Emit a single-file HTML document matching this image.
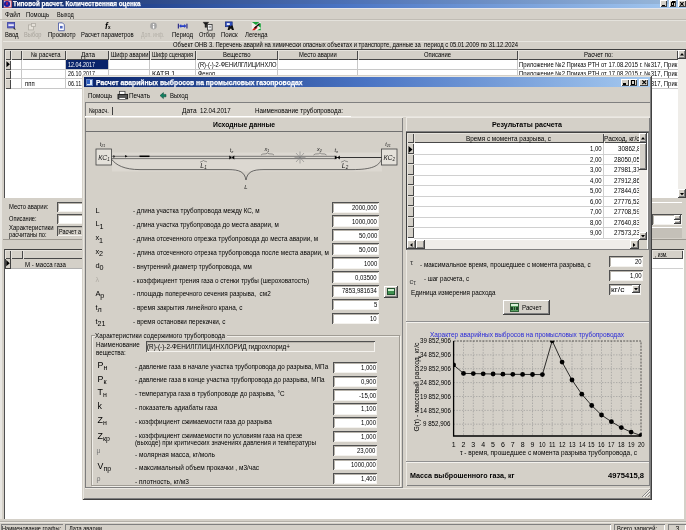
<!DOCTYPE html>
<html lang="ru"><head><meta charset="utf-8"><title>Типовой расчет</title>
<style>
html,body{margin:0;padding:0;}
body{width:686px;height:530px;overflow:hidden;background:#d4d0c8;position:relative;font-family:"Liberation Sans", "DejaVu Sans", sans-serif;}
div{position:absolute;box-sizing:border-box;}
svg{position:absolute;overflow:visible;}
.t{position:absolute;white-space:pre;transform-origin:0 50%;left:0;}
#root{left:0;top:0;width:686px;height:530px;overflow:hidden;will-change:transform;opacity:0.999;filter:blur(0.35px);}
#t1{left:12.50px;transform:scaleX(0.8446);}
#t2{left:5.00px;transform:scaleX(0.9002);}
#t3{left:26.00px;transform:scaleX(0.8504);}
#t4{left:57.00px;transform:scaleX(0.7970);}
#t5{left:4.50px;transform:scaleX(0.8364);}
#t6{left:23.50px;transform:scaleX(0.8140);}
#t7{left:47.50px;transform:scaleX(0.8602);}
#t8{left:80.50px;transform:scaleX(0.8350);}
#t9{left:141.00px;transform:scaleX(0.7373);}
#t10{left:172.00px;transform:scaleX(0.8550);}
#t11{left:198.70px;transform:scaleX(0.7969);}
#t12{left:221.00px;transform:scaleX(0.8502);}
#t13{left:244.50px;transform:scaleX(0.8451);}
#t14{left:104.88px;transform:scaleX(1.0000);}
#t15{left:108.02px;transform:scaleX(1.0000);}
#t16{left:173.00px;transform:scaleX(0.8365);}
#t17{left:30.50px;transform:scaleX(0.8429);}
#t18{left:80.50px;transform:scaleX(0.9023);}
#t19{left:111.00px;transform:scaleX(0.8322);}
#t20{left:151.50px;transform:scaleX(0.7793);}
#t21{left:223.00px;transform:scaleX(0.8494);}
#t22{left:299.00px;transform:scaleX(0.8322);}
#t23{left:424.00px;transform:scaleX(0.8380);}
#t24{left:584.00px;transform:scaleX(0.8569);}
#t25{left:67.50px;transform:scaleX(0.7704);}
#t26{left:67.50px;transform:scaleX(0.7704);}
#t27{left:67.50px;transform:scaleX(0.7823);}
#t28{left:25.00px;transform:scaleX(0.8440);}
#t29{left:151.80px;transform:scaleX(0.9906);}
#t30{left:198.00px;transform:scaleX(0.8240);}
#t31{left:198.00px;transform:scaleX(0.8132);}
#t32{left:519.00px;transform:scaleX(0.8445);}
#t33{left:519.00px;transform:scaleX(0.8445);}
#t34{left:519.00px;transform:scaleX(0.8445);}
#t35{left:9.00px;transform:scaleX(0.8340);}
#t36{left:9.00px;transform:scaleX(0.8051);}
#t37{left:9.00px;transform:scaleX(0.8573);}
#t38{left:9.00px;transform:scaleX(0.8105);}
#t39{left:59.00px;transform:scaleX(0.7827);}
#t40{left:655.00px;transform:scaleX(0.7030);}
#t41{left:24.50px;transform:scaleX(0.8738);}
#t42{left:2.00px;transform:scaleX(0.8022);}
#t43{left:69.00px;transform:scaleX(0.8129);}
#t44{left:617.00px;transform:scaleX(0.8271);}
#t45{left:675.55px;transform:scaleX(1.0000);}
#t46{left:96.00px;transform:scaleX(0.8995);}
#t47{left:87.60px;transform:scaleX(0.8984);}
#t48{left:128.70px;transform:scaleX(0.9155);}
#t49{left:169.50px;transform:scaleX(0.8591);}
#t50{left:89.30px;transform:scaleX(0.8144);}
#t51{left:181.80px;transform:scaleX(0.9410);}
#t52{left:200.20px;transform:scaleX(0.8760);}
#t53{left:255.30px;transform:scaleX(0.8982);}
#t54{left:212.70px;transform:scaleX(0.9057);}
#t55{left:98.19px;transform:scaleX(1.0000);}
#t56{left:383.49px;transform:scaleX(1.0000);}
#t57{left:99.73px;transform:scaleX(1.0000);}
#t58{left:385.23px;transform:scaleX(1.0000);}
#t59{left:229.72px;transform:scaleX(1.0000);}
#t60{left:334.52px;transform:scaleX(1.0000);}
#t61{left:264.62px;transform:scaleX(1.0000);}
#t62{left:316.93px;transform:scaleX(1.0000);}
#t63{left:200.29px;transform:scaleX(1.0000);}
#t64{left:341.79px;transform:scaleX(1.0000);}
#t65{left:244.33px;transform:scaleX(1.0000);}
#t66{left:95.40px;transform:scaleX(1.0000);}
#t67{left:132.80px;transform:scaleX(0.8996);}
#t68{left:352.10px;transform:scaleX(0.8526);}
#t69{left:95.40px;transform:scaleX(1.0000);}
#t70{left:132.80px;transform:scaleX(0.8935);}
#t71{left:352.10px;transform:scaleX(0.8526);}
#t72{left:95.40px;transform:scaleX(1.0000);}
#t73{left:132.80px;transform:scaleX(0.9044);}
#t74{left:358.70px;transform:scaleX(0.8543);}
#t75{left:95.40px;transform:scaleX(1.0000);}
#t76{left:132.80px;transform:scaleX(0.9077);}
#t77{left:358.70px;transform:scaleX(0.8543);}
#t78{left:95.40px;transform:scaleX(1.0000);}
#t79{left:132.80px;transform:scaleX(0.8985);}
#t80{left:363.80px;transform:scaleX(0.8473);}
#t81{left:95.40px;transform:scaleX(1.0000);}
#t82{left:132.80px;transform:scaleX(0.9009);}
#t83{left:355.40px;transform:scaleX(0.8533);}
#t84{left:95.40px;transform:scaleX(1.0000);}
#t85{left:132.80px;transform:scaleX(0.9080);}
#t86{left:342.20px;transform:scaleX(0.8511);}
#t87{left:95.40px;transform:scaleX(1.0000);}
#t88{left:132.80px;transform:scaleX(0.9130);}
#t89{left:373.70px;transform:scaleX(0.8448);}
#t90{left:95.40px;transform:scaleX(1.0000);}
#t91{left:132.80px;transform:scaleX(0.9106);}
#t92{left:370.40px;transform:scaleX(0.8465);}
#t93{left:95.40px;transform:scaleX(0.9027);}
#t94{left:95.60px;transform:scaleX(0.9025);}
#t95{left:95.60px;transform:scaleX(0.8950);}
#t96{left:147.40px;transform:scaleX(0.9083);}
#t97{left:97.50px;transform:scaleX(1.0000);}
#t98{left:135.00px;transform:scaleX(0.9048);}
#t99{left:360.70px;transform:scaleX(0.8556);}
#t100{left:97.50px;transform:scaleX(1.0000);}
#t101{left:135.00px;transform:scaleX(0.9062);}
#t102{left:360.70px;transform:scaleX(0.8556);}
#t103{left:97.50px;transform:scaleX(1.0000);}
#t104{left:135.00px;transform:scaleX(0.9049);}
#t105{left:358.50px;transform:scaleX(0.8661);}
#t106{left:97.50px;transform:scaleX(1.0000);}
#t107{left:135.00px;transform:scaleX(0.9229);}
#t108{left:360.70px;transform:scaleX(0.8556);}
#t109{left:97.50px;transform:scaleX(1.0000);}
#t110{left:135.00px;transform:scaleX(0.9130);}
#t111{left:360.70px;transform:scaleX(0.8556);}
#t112{left:97.50px;transform:scaleX(1.0000);}
#t113{left:360.70px;transform:scaleX(0.8556);}
#t114{left:96.60px;transform:scaleX(1.0000);}
#t115{left:135.00px;transform:scaleX(0.9365);}
#t116{left:357.40px;transform:scaleX(0.8543);}
#t117{left:97.50px;transform:scaleX(1.0000);}
#t118{left:135.00px;transform:scaleX(0.9247);}
#t119{left:350.80px;transform:scaleX(0.8526);}
#t120{left:96.60px;transform:scaleX(1.0000);}
#t121{left:135.00px;transform:scaleX(0.9399);}
#t122{left:360.70px;transform:scaleX(0.8556);}
#t123{left:135.00px;transform:scaleX(0.9143);}
#t124{left:135.00px;transform:scaleX(0.8938);}
#t125{left:492.00px;transform:scaleX(0.9418);}
#t126{left:465.50px;transform:scaleX(0.9094);}
#t127{left:604.30px;transform:scaleX(0.9334);}
#t128{left:590.10px;transform:scaleX(0.8587);}
#t129{left:617.80px;transform:scaleX(0.8889);}
#t130{left:590.10px;transform:scaleX(0.8587);}
#t131{left:614.30px;transform:scaleX(0.8903);}
#t132{left:590.10px;transform:scaleX(0.8587);}
#t133{left:614.30px;transform:scaleX(0.8903);}
#t134{left:590.10px;transform:scaleX(0.8587);}
#t135{left:614.30px;transform:scaleX(0.8903);}
#t136{left:590.10px;transform:scaleX(0.8587);}
#t137{left:614.30px;transform:scaleX(0.8903);}
#t138{left:590.10px;transform:scaleX(0.8587);}
#t139{left:614.30px;transform:scaleX(0.8903);}
#t140{left:590.10px;transform:scaleX(0.8587);}
#t141{left:614.30px;transform:scaleX(0.8903);}
#t142{left:590.10px;transform:scaleX(0.8587);}
#t143{left:614.30px;transform:scaleX(0.8903);}
#t144{left:590.10px;transform:scaleX(0.8587);}
#t145{left:614.30px;transform:scaleX(0.8903);}
#t146{left:410.11px;transform:scaleX(1.0000);}
#t147{left:419.80px;transform:scaleX(0.9066);}
#t148{left:635.30px;transform:scaleX(0.8465);}
#t149{left:409.44px;transform:scaleX(1.0000);}
#t150{left:424.00px;transform:scaleX(0.8786);}
#t151{left:630.20px;transform:scaleX(0.8587);}
#t152{left:410.50px;transform:scaleX(0.9004);}
#t153{left:611.00px;transform:scaleX(1.2113);}
#t154{left:522.40px;transform:scaleX(0.8803);}
#t155{left:430.00px;transform:scaleX(0.9268);}
#t156{left:419.60px;transform:scaleX(0.8845);}
#t157{left:419.60px;transform:scaleX(0.8845);}
#t158{left:419.60px;transform:scaleX(0.8845);}
#t159{left:419.60px;transform:scaleX(0.8845);}
#t160{left:419.60px;transform:scaleX(0.8845);}
#t161{left:419.60px;transform:scaleX(0.8845);}
#t162{left:423.10px;transform:scaleX(0.8826);}
#t163{left:451.65px;transform:scaleX(1.0000);}
#t164{left:461.51px;transform:scaleX(1.0000);}
#t165{left:471.37px;transform:scaleX(1.0000);}
#t166{left:481.24px;transform:scaleX(1.0000);}
#t167{left:491.10px;transform:scaleX(1.0000);}
#t168{left:500.96px;transform:scaleX(1.0000);}
#t169{left:510.83px;transform:scaleX(1.0000);}
#t170{left:520.69px;transform:scaleX(1.0000);}
#t171{left:530.55px;transform:scaleX(1.0000);}
#t172{left:539.07px;transform:scaleX(0.8465);}
#t173{left:548.93px;transform:scaleX(0.9064);}
#t174{left:558.79px;transform:scaleX(0.8465);}
#t175{left:568.66px;transform:scaleX(0.8465);}
#t176{left:578.52px;transform:scaleX(0.8465);}
#t177{left:588.38px;transform:scaleX(0.8465);}
#t178{left:598.25px;transform:scaleX(0.8465);}
#t179{left:608.11px;transform:scaleX(0.8465);}
#t180{left:617.97px;transform:scaleX(0.8465);}
#t181{left:627.84px;transform:scaleX(0.8465);}
#t182{left:637.70px;transform:scaleX(0.8465);}
#t183{left:459.50px;transform:scaleX(0.9258);}
#t184{left:410.40px;transform:scaleX(0.9500);}
#t185{left:608.00px;transform:scaleX(1.0154);}
</style></head>
<body>
<div id="root">
<div style="left:0px;top:0px;width:686px;height:8.4px;background:linear-gradient(90deg,#0a246a 0%,#4a74c4 50%,#a6caf0 100%);"></div>
<div style="left:0px;top:0px;width:686px;height:4px;background:rgba(90,90,90,0.14);"></div>
<div style="left:0px;top:8.4px;width:686px;height:1px;background:#e6e6ea;"></div>
<div style="left:2.6px;top:-0.5px;width:9.2px;height:8.7px;background:#e4c4d4;border-radius:1.5px;border:0.8px solid #c06070;border-left-color:#404080;"></div>
<div style="left:4px;top:1px;width:6.4px;height:5.8px;background:#1c1ca0;border-radius:50%;"></div>
<div style="left:6.2px;top:2.4px;width:1.4px;height:3px;background:#a02060;border-radius:1px;"></div>
<span class="t" id="t1" style="top:-0.55px;font-size:7.5px;line-height:9.5px;color:#fff;font-weight:bold;-webkit-text-stroke:0.25px #fff;">Типовой расчет. Количественная оценка</span>
<div style="left:660.4px;top:-0.5px;width:6.8px;height:7.6px;background:#d4d0c8;box-shadow:inset 1px 1px 0 #fff, inset -1px -1px 0 #404040;"></div>
<div style="left:669px;top:-0.5px;width:7.4px;height:7.6px;background:#d4d0c8;box-shadow:inset 1px 1px 0 #fff, inset -1px -1px 0 #404040;"></div>
<div style="left:678.2px;top:-0.5px;width:7.8px;height:7.6px;background:#d4d0c8;box-shadow:inset 1px 1px 0 #fff, inset -1px -1px 0 #404040;"></div>
<div style="left:662px;top:4.6px;width:3px;height:1.1px;background:#000;"></div>
<div style="left:670.6px;top:2.4px;width:3.6px;height:3.4px;border:0.8px solid #000;border-top-width:1.3px;"></div>
<div style="left:671.8px;top:1.2px;width:3.4px;height:2px;border-top:1.2px solid #000;border-right:0.8px solid #000;"></div>
<svg style="left:680.2px;top:1.6px" width="3.8" height="3.8"><path d="M0.2 0.2L3.6 3.6M3.6 0.2L0.2 3.6" stroke="#000" stroke-width="1.1"/></svg>
<div style="left:0px;top:0px;width:2.2px;height:521px;background:#e8e6e1;"></div>
<span class="t" id="t2" style="top:10.10px;font-size:7px;line-height:9px;color:#000;">Файл</span>
<span class="t" id="t3" style="top:10.10px;font-size:7px;line-height:9px;color:#000;">Помощь</span>
<span class="t" id="t4" style="top:10.10px;font-size:7px;line-height:9px;color:#000;">Выход</span>
<div style="left:0px;top:19px;width:686px;height:1px;background:#c0bcb4;"></div>
<div style="left:0px;top:20px;width:686px;height:1px;background:#e4e2dc;"></div>
<span class="t" id="t5" style="top:30.10px;font-size:7px;line-height:9px;color:#000;">Ввод</span>
<span class="t" id="t6" style="top:30.10px;font-size:7px;line-height:9px;color:#a8a49c;">Выбор</span>
<span class="t" id="t7" style="top:30.10px;font-size:7px;line-height:9px;color:#000;">Просмотр</span>
<span class="t" id="t8" style="top:30.10px;font-size:7px;line-height:9px;color:#000;">Расчет параметров</span>
<span class="t" id="t9" style="top:30.10px;font-size:7px;line-height:9px;color:#b4b0a8;">Доп. инф.</span>
<span class="t" id="t10" style="top:30.10px;font-size:7px;line-height:9px;color:#000;">Период</span>
<span class="t" id="t11" style="top:30.10px;font-size:7px;line-height:9px;color:#000;">Отбор</span>
<span class="t" id="t12" style="top:30.10px;font-size:7px;line-height:9px;color:#000;">Поиск</span>
<span class="t" id="t13" style="top:30.10px;font-size:7px;line-height:9px;color:#000;">Легенда</span>
<svg style="left:0;top:21px" width="280" height="12" viewBox="0 21 280 12">
<g transform="translate(0,0.9)">
<rect x="7.6" y="21.6" width="7" height="5.4" fill="#6468c8" stroke="#3840a0" stroke-width="0.8"/>
<rect x="8.4" y="23.4" width="5.4" height="1.6" fill="#f4f4fc"/>
<path d="M13.6 26.4l2.4 2.2h-1.2l-1.2-0.4z" fill="#202020"/>
<rect x="28.5" y="24" width="5" height="5" fill="#e4e0d8" stroke="#b0aca4" stroke-width="0.8"/>
<rect x="31.5" y="22.5" width="4" height="3" fill="#e4e0d8" stroke="#b0aca4" stroke-width="0.8"/>
<path d="M58.5 22h4l1.8 1.8v6h-5.8z" fill="#fff" stroke="#4050a0" stroke-width="0.8"/>
<rect x="60" y="25" width="2.6" height="2.6" fill="#5068c0"/>
<rect x="150.2" y="21.7" width="6.6" height="6.8" rx="3.3" fill="#a4a4a4"/>
<rect x="152.9" y="23" width="1.3" height="1.2" fill="#fff"/>
<rect x="152.9" y="24.8" width="1.3" height="2.8" fill="#fff"/>
<path d="M179 25.2l2.2-2v1.2h3v-1.2l2.2 2-2.2 2v-1.2h-3v1.2z" fill="#2840c8"/>
<rect x="177.8" y="22.8" width="1.1" height="4.8" fill="#202080"/>
<rect x="186.4" y="22.8" width="1.1" height="4.8" fill="#202080"/>
<path d="M203.2 21.4h5.4l-1.9 2.4v2.6h-1.6v-2.6z" fill="#181818" stroke="#181818" stroke-width="0.5"/>
<rect x="207.6" y="23.6" width="4.5" height="5.6" fill="#fff" stroke="#282828" stroke-width="0.8"/>
<path d="M208.6 25.4h2.6M208.6 26.8h2.6" stroke="#505050" stroke-width="0.6"/>
<rect x="225.4" y="21" width="6.8" height="4.8" fill="#3050c0" stroke="#182878" stroke-width="0.7"/>
<rect x="226.8" y="22.2" width="3" height="2" fill="#e8ecf8"/>
<path d="M227.6 29l1.2-4.4h1.4l.5 1.6.5-1.6h1.4l1.4 4.4h-2.2l-.3-1.2h-1.6l-.3 1.2z" fill="#101010"/>
<rect x="251.8" y="21" width="9" height="8.4" fill="#f0f0ec"/>
<path d="M251.8 21h7.6l-3.4 3.2z" fill="#18a038"/>
<path d="M260.8 22v5l-3-2.4z" fill="#18a038"/>
<path d="M252 29.4l3.6-4.2 2 1.6-3 2.6z" fill="#d82020"/>
<path d="M259.6 22.6l-5 4.8" stroke="#101010" stroke-width="1.3"/>
<path d="M257 29.4h3.8v-2z" fill="#18a038"/>
</g></svg>
<span class="t" id="t14" style="top:20.95px;font-size:8.5px;line-height:10.5px;color:#000;font-weight:bold;font-style:italic;font-family:"Liberation Serif",serif;">f</span>
<span class="t" id="t15" style="top:24.50px;font-size:4.6px;line-height:6.6px;color:#000;font-weight:bold;">x</span>
<div style="left:3px;top:40.5px;width:683px;height:8.5px;background:#d4d0c8;box-shadow:inset 0 1px 0 #e8e6e0;"></div>
<span class="t" id="t16" style="top:40.10px;font-size:7px;line-height:9px;color:#000;">Объект ОНВ 3. Перечень аварий на химически опасных объектах и транспорте, данные за  период с 05.01.2009 по 31.12.2024</span>
<div style="left:4px;top:49px;width:682px;height:149px;background:#fff;border-left:1px solid #505050;border-top:1px solid #404040;"></div>
<div style="left:5px;top:50px;width:6px;height:10px;background:#d4d0c8;box-shadow:inset 1px 1px 0 #e6e3dd, inset -1px -1px 0 #484848;"></div>
<div style="left:11px;top:50px;width:11px;height:10px;background:#d4d0c8;box-shadow:inset 1px 1px 0 #e6e3dd, inset -1px -1px 0 #484848;"></div>
<div style="left:22px;top:50px;width:44px;height:10px;background:#d4d0c8;box-shadow:inset 1px 1px 0 #e6e3dd, inset -1px -1px 0 #484848;"></div>
<div style="left:66px;top:50px;width:43px;height:10px;background:#d4d0c8;box-shadow:inset 1px 1px 0 #e6e3dd, inset -1px -1px 0 #484848;"></div>
<div style="left:109px;top:50px;width:41px;height:10px;background:#d4d0c8;box-shadow:inset 1px 1px 0 #e6e3dd, inset -1px -1px 0 #484848;"></div>
<div style="left:150px;top:50px;width:46px;height:10px;background:#d4d0c8;box-shadow:inset 1px 1px 0 #e6e3dd, inset -1px -1px 0 #484848;"></div>
<div style="left:196px;top:50px;width:82px;height:10px;background:#d4d0c8;box-shadow:inset 1px 1px 0 #e6e3dd, inset -1px -1px 0 #484848;"></div>
<div style="left:278px;top:50px;width:80px;height:10px;background:#d4d0c8;box-shadow:inset 1px 1px 0 #e6e3dd, inset -1px -1px 0 #484848;"></div>
<div style="left:358px;top:50px;width:160px;height:10px;background:#d4d0c8;box-shadow:inset 1px 1px 0 #e6e3dd, inset -1px -1px 0 #484848;"></div>
<div style="left:518px;top:50px;width:160px;height:10px;background:#d4d0c8;box-shadow:inset 1px 1px 0 #e6e3dd, inset -1px -1px 0 #484848;"></div>
<span class="t" id="t17" style="top:50.10px;font-size:7px;line-height:9px;color:#000;">№ расчета</span>
<span class="t" id="t18" style="top:50.10px;font-size:7px;line-height:9px;color:#000;">Дата</span>
<span class="t" id="t19" style="top:50.10px;font-size:7px;line-height:9px;color:#000;">Шифр аварии</span>
<span class="t" id="t20" style="top:50.10px;font-size:7px;line-height:9px;color:#000;">Шифр сценария</span>
<span class="t" id="t21" style="top:50.10px;font-size:7px;line-height:9px;color:#000;">Вещество</span>
<span class="t" id="t22" style="top:50.10px;font-size:7px;line-height:9px;color:#000;">Место аварии</span>
<span class="t" id="t23" style="top:50.10px;font-size:7px;line-height:9px;color:#000;">Описание</span>
<span class="t" id="t24" style="top:50.10px;font-size:7px;line-height:9px;color:#000;">Расчет по:</span>
<div style="left:5px;top:60px;width:6px;height:10px;background:#d4d0c8;box-shadow:inset 1px 1px 0 #e6e3dd, inset -1px -1px 0 #484848;"></div>
<div style="left:11px;top:69px;width:667px;height:1px;background:#c8c8c8;"></div>
<div style="left:5px;top:70px;width:6px;height:9px;background:#d4d0c8;box-shadow:inset 1px 1px 0 #e6e3dd, inset -1px -1px 0 #484848;"></div>
<div style="left:11px;top:78px;width:667px;height:1px;background:#c8c8c8;"></div>
<div style="left:5px;top:79px;width:6px;height:10px;background:#d4d0c8;box-shadow:inset 1px 1px 0 #e6e3dd, inset -1px -1px 0 #484848;"></div>
<div style="left:11px;top:88px;width:667px;height:1px;background:#c8c8c8;"></div>
<div style="left:21px;top:60px;width:1px;height:29px;background:#c8c8c8;"></div>
<div style="left:65px;top:60px;width:1px;height:29px;background:#c8c8c8;"></div>
<div style="left:108px;top:60px;width:1px;height:29px;background:#c8c8c8;"></div>
<div style="left:149px;top:60px;width:1px;height:29px;background:#c8c8c8;"></div>
<div style="left:195px;top:60px;width:1px;height:29px;background:#c8c8c8;"></div>
<div style="left:277px;top:60px;width:1px;height:29px;background:#c8c8c8;"></div>
<div style="left:357px;top:60px;width:1px;height:29px;background:#c8c8c8;"></div>
<div style="left:517px;top:60px;width:1px;height:29px;background:#c8c8c8;"></div>
<svg style="left:6.2px;top:61px" width="4.4" height="6.6" viewBox="0 0 5 7"><path d="M0.5 0L4.5 3.5L0.5 7z" fill="#000"/></svg>
<div style="left:66px;top:60px;width:42px;height:9px;background:#0a246a;"></div>
<span class="t" id="t25" style="top:59.80px;font-size:7px;line-height:9px;color:#fff;">12.04.2017</span>
<span class="t" id="t26" style="top:69.40px;font-size:7px;line-height:9px;color:#000;">26.10.2017</span>
<span class="t" id="t27" style="top:79.00px;font-size:7px;line-height:9px;color:#000;">06.11.2017</span>
<span class="t" id="t28" style="top:79.20px;font-size:7px;line-height:9px;color:#000;">ппп</span>
<span class="t" id="t29" style="top:69.40px;font-size:7px;line-height:9px;color:#000;">КАТЯ 1</span>
<span class="t" id="t30" style="top:59.80px;font-size:7px;line-height:9px;color:#000;">(R)-(-)-2-ФЕНИЛГЛИЦИНХЛО</span>
<span class="t" id="t31" style="top:69.40px;font-size:7px;line-height:9px;color:#000;">Фенол</span>
<span class="t" id="t32" style="top:59.80px;font-size:7px;line-height:9px;color:#000;">Приложение №2 Приказ РТН от 17.08.2015 г. №317, Прик</span>
<span class="t" id="t33" style="top:69.40px;font-size:7px;line-height:9px;color:#000;">Приложение №2 Приказ РТН от 17.08.2015 г. №317, Прик</span>
<span class="t" id="t34" style="top:79.00px;font-size:7px;line-height:9px;color:#000;">Приложение №2 Приказ РТН от 17.08.2015 г. №317, Прик</span>
<div style="left:678px;top:50px;width:8px;height:148px;background:#efede9;"></div>
<div style="left:678px;top:50px;width:8px;height:9px;background:#d4d0c8;box-shadow:inset -1px -1px 0 #404040, inset 1px 1px 0 #fff, inset -2px -2px 0 #808080;"></div>
<div style="left:678px;top:189px;width:8px;height:9px;background:#d4d0c8;box-shadow:inset -1px -1px 0 #404040, inset 1px 1px 0 #fff, inset -2px -2px 0 #808080;"></div>
<svg style="left:680px;top:53.2px" width="4" height="2.6"><path d="M0 2.6L2 0L4 2.6z" fill="#000"/></svg>
<svg style="left:680px;top:192.5px" width="4" height="2.6"><path d="M0 0L2 2.6L4 0z" fill="#000"/></svg>
<div style="left:3px;top:198.5px;width:683px;height:41px;background:#d4d0c8;"></div>
<span class="t" id="t35" style="top:202.30px;font-size:7px;line-height:9px;color:#000;">Место аварии:</span>
<span class="t" id="t36" style="top:213.70px;font-size:7px;line-height:9px;color:#000;">Описание:</span>
<span class="t" id="t37" style="top:223.20px;font-size:7px;line-height:9px;color:#000;">Характеристики</span>
<span class="t" id="t38" style="top:230.10px;font-size:7px;line-height:9px;color:#000;">расчитаны по:</span>
<div style="left:57px;top:202px;width:40px;height:10px;background:#fff;box-shadow:inset 1px 1px 0 #505050, inset -1px -1px 0 #f4f2ee, inset 2px 2px 0 #b8b4ac;"></div>
<div style="left:57px;top:214px;width:40px;height:10px;background:#fff;box-shadow:inset 1px 1px 0 #505050, inset -1px -1px 0 #f4f2ee, inset 2px 2px 0 #b8b4ac;"></div>
<div style="left:57px;top:226px;width:40px;height:10.4px;background:#d4d0c8;box-shadow:inset 1px 1px 0 #505050, inset -1px -1px 0 #f4f2ee, inset 2px 2px 0 #b8b4ac;"></div>
<span class="t" id="t39" style="top:227.00px;font-size:7px;line-height:9px;color:#000;">Расчет а</span>
<div style="left:652px;top:201.5px;width:30px;height:0.8px;background:#fff;"></div>
<div style="left:652px;top:214px;width:29.8px;height:11.4px;background:#fff;box-shadow:inset 1px 1px 0 #505050, inset -1px -1px 0 #f4f2ee, inset 2px 2px 0 #b8b4ac;"></div>
<div style="left:674px;top:215.2px;width:6.6px;height:4.6px;background:#d4d0c8;box-shadow:inset -1px -1px 0 #404040, inset 1px 1px 0 #fff, inset -2px -2px 0 #808080;"></div>
<div style="left:674px;top:219.8px;width:6.6px;height:4.6px;background:#d4d0c8;box-shadow:inset -1px -1px 0 #404040, inset 1px 1px 0 #fff, inset -2px -2px 0 #808080;"></div>
<div style="left:652px;top:226.6px;width:30px;height:0.8px;background:#fff;"></div>
<div style="left:652px;top:228.3px;width:30px;height:9.6px;background:#c4c0b8;"></div>
<div style="left:3px;top:239.5px;width:683px;height:9.5px;background:#d2cec6;"></div>
<div style="left:3px;top:239px;width:683px;height:1px;background:#9c9890;"></div>
<div style="left:4px;top:249px;width:679.5px;height:269.5px;background:#fff;border-left:1px solid #505050;border-top:1px solid #404040;"></div>
<div style="left:5px;top:250px;width:6px;height:9px;background:#d4d0c8;box-shadow:inset 1px 1px 0 #e6e3dd, inset -1px -1px 0 #484848;"></div>
<div style="left:11px;top:250px;width:12px;height:9px;background:#d4d0c8;box-shadow:inset 1px 1px 0 #e6e3dd, inset -1px -1px 0 #484848;"></div>
<div style="left:23px;top:250px;width:629px;height:9px;background:#d4d0c8;box-shadow:inset 1px 1px 0 #e6e3dd, inset -1px -1px 0 #484848;"></div>
<div style="left:652px;top:250px;width:31px;height:9px;background:#d4d0c8;box-shadow:inset 1px 1px 0 #e6e3dd, inset -1px -1px 0 #484848;"></div>
<span class="t" id="t40" style="top:249.70px;font-size:7px;line-height:9px;color:#000;">, изм.</span>
<div style="left:5px;top:259px;width:6px;height:10px;background:#d4d0c8;border:1px solid #404040;border-top:none;"></div>
<div style="left:11px;top:259px;width:301px;height:9.5px;background:#d4d0c8;border-bottom:1px solid #b0b0b0;"></div>
<div style="left:312px;top:268px;width:371px;height:1px;background:#d0d0d0;"></div>
<svg style="left:6.4px;top:260.4px" width="4" height="6.4" viewBox="0 0 4.5 7"><path d="M0.3 0L4.2 3.5L0.3 7z" fill="#000"/></svg>
<span class="t" id="t41" style="top:259.80px;font-size:7px;line-height:9px;color:#000;">М - масса газа</span>
<div style="left:0px;top:518.5px;width:686px;height:11.5px;background:#d4d0c8;"></div>
<div style="left:0px;top:521px;width:686px;height:1px;background:#b4b0a8;"></div>
<div style="left:0px;top:522px;width:686px;height:1px;background:#ece9e3;"></div>
<div style="left:1px;top:523.6px;width:62px;height:8px;box-shadow:inset 1px 1px 0 #808080;"></div>
<div style="left:65px;top:523.6px;width:546px;height:8px;box-shadow:inset 1px 1px 0 #808080, inset -1px 0 0 #fff;"></div>
<div style="left:613.7px;top:523.6px;width:51.7px;height:8px;box-shadow:inset 1px 1px 0 #808080, inset -1px 0 0 #fff;"></div>
<div style="left:667.6px;top:523.6px;width:18px;height:8px;box-shadow:inset 1px 1px 0 #808080, inset -1px 0 0 #fff;"></div>
<span class="t" id="t42" style="top:524.10px;font-size:7px;line-height:9px;color:#000;">Наименование графы:</span>
<span class="t" id="t43" style="top:524.10px;font-size:7px;line-height:9px;color:#000;">Дата аварии</span>
<span class="t" id="t44" style="top:524.10px;font-size:7px;line-height:9px;color:#000;">Всего записей:</span>
<span class="t" id="t45" style="top:524.10px;font-size:7px;line-height:9px;color:#000;">3</span>
<div style="left:82px;top:74.7px;width:570.3px;height:425.6px;background:#d4d0c8;box-shadow:inset 1px 1px 0 #d4d0c8, inset -1px -1px 0 #404040, inset 2px 2px 0 #e8e6e0, inset -2px -2px 0 #808080;"></div>
<div style="left:84.3px;top:77.2px;width:566px;height:10px;background:linear-gradient(90deg,#0a246a 0%,#4a74c4 50%,#a6caf0 100%);"></div>
<div style="left:86.2px;top:78.6px;width:7.3px;height:7.6px;background:#dce8f8;border:1px solid #6080c0;"></div>
<div style="left:87.2px;top:80px;width:2.5px;height:4px;background:#3060c0;"></div>
<span class="t" id="t46" style="top:78.25px;font-size:7.5px;line-height:9.5px;color:#fff;font-weight:bold;-webkit-text-stroke:0.25px #fff;">Расчет аварийных выбросов на промысловых газопроводах</span>
<div style="left:620.5px;top:78.6px;width:8px;height:7.8px;background:#d4d0c8;box-shadow:inset 1px 1px 0 #fff, inset -1px -1px 0 #404040;"></div>
<div style="left:628.8px;top:78.6px;width:8.4px;height:7.8px;background:#d4d0c8;box-shadow:inset 1px 1px 0 #fff, inset -1px -1px 0 #404040;"></div>
<div style="left:639.4px;top:78.6px;width:8.6px;height:7.8px;background:#d4d0c8;box-shadow:inset 1px 1px 0 #fff, inset -1px -1px 0 #404040;"></div>
<div style="left:622.5px;top:83.4px;width:3.6px;height:1.3px;background:#000;"></div>
<div style="left:630.6px;top:80.2px;width:4.8px;height:4.6px;border:1px solid #000;border-top-width:1.6px;"></div>
<svg style="left:641.6px;top:80.3px" width="4.4" height="4.4"><path d="M0.3 0.3L4.1 4.1M4.1 0.3L0.3 4.1" stroke="#000" stroke-width="1.2"/></svg>
<span class="t" id="t47" style="top:91.40px;font-size:7px;line-height:9px;color:#000;">Помощь</span>
<span class="t" id="t48" style="top:91.40px;font-size:7px;line-height:9px;color:#000;">Печать</span>
<span class="t" id="t49" style="top:91.40px;font-size:7px;line-height:9px;color:#000;">Выход</span>
<svg style="left:116px;top:90px" width="14" height="11" viewBox="116 90 14 11">
<rect x="119.5" y="91.3" width="5.5" height="3.4" fill="#fff" stroke="#303030" stroke-width="0.7"/>
<rect x="118" y="94.4" width="9.6" height="4.4" fill="#585858" stroke="#181818" stroke-width="0.9"/>
<rect x="119" y="97.6" width="6.6" height="2" fill="#fff" stroke="#303030" stroke-width="0.6"/>
</svg>
<svg style="left:159px;top:91px" width="8" height="9" viewBox="159 91 8 9">
<path d="M160 95.6L163.4 92.6V94.4H166V96.8H163.4V98.6Z" fill="#108060" stroke="#084030" stroke-width="0.5"/>
</svg>
<div style="left:85px;top:102px;width:565px;height:14.5px;background:#dcd8d0;box-shadow:inset 1px 1px 0 #808080;"></div>
<div style="left:85px;top:116px;width:266px;height:1.4px;background:#fff;"></div>
<div style="left:351px;top:116px;width:299px;height:1px;background:#e6e3dd;"></div>
<span class="t" id="t50" style="top:106.10px;font-size:7px;line-height:9px;color:#000;">№расч.</span>
<div style="left:112px;top:107px;width:0.8px;height:8px;background:#404040;"></div>
<span class="t" id="t51" style="top:106.30px;font-size:7px;line-height:9px;color:#000;">Дата</span>
<span class="t" id="t52" style="top:106.30px;font-size:7px;line-height:9px;color:#000;">12.04.2017</span>
<span class="t" id="t53" style="top:106.10px;font-size:7px;line-height:9px;color:#000;">Наименование трубопровода:</span>
<div style="left:85px;top:117px;width:318px;height:371px;background:#d4d0c8;box-shadow:inset 1px 1px 0 #ece9e3, inset -1px -1px 0 #808080;"></div>
<div style="left:84.6px;top:117.5px;width:1px;height:370px;background:#7c7c7c;"></div>
<div style="left:85px;top:131px;width:318px;height:68px;border-top:1px solid #707070;border-left:1px solid #808080;"></div>
<span class="t" id="t54" style="top:119.85px;font-size:7.5px;line-height:9.5px;color:#000;font-weight:bold;">Исходные данные</span>
<svg style="left:86px;top:133px" width="316" height="66" viewBox="86 133 316 66">
<rect x="112" y="152.5" width="270" height="19" fill="#e2dfd8" opacity="0.55"/>
<rect x="96" y="149" width="15.5" height="16" fill="#e4e1da" stroke="#404040" stroke-width="0.8"/>
<rect x="381.5" y="149" width="15.5" height="16" fill="#e4e1da" stroke="#404040" stroke-width="0.8"/>
<path d="M111.5 156.3H337M111.5 158.6H337" stroke="#484848" stroke-width="0.7" fill="none"/>
<path d="M337 157.5H381.5" stroke="#202020" stroke-width="0.9" fill="none"/>
<path d="M139.5 156.3H149.5" stroke="#000" stroke-width="1.5"/>
<path d="M111.5 159.2C116 165 124 169.6 140 169.6H228C240 169.6 244.5 172 246 180C247.5 172 252 169.6 264 169.6H352C372 169.6 379 166 381.5 159.2" stroke="#404040" stroke-width="0.75" fill="none"/>
<path d="M200 162.5C201 161 203 161.5 203.5 160.5C204 161.5 206 161 207 162M341 162.5C342 161 344 161.5 344.5 160.5C345 161.5 347 161 348 162" stroke="#404040" stroke-width="0.5" fill="none"/>
<path d="M229.3 155.4L231.8 157.5L229.3 159.6ZM234.3 155.4L231.8 157.5L234.3 159.6Z" fill="#000"/>
<path d="M334.8 155.4L337.3 157.5L334.8 159.6ZM339.8 155.4L337.3 157.5L339.8 159.6Z" fill="#000"/>
<path d="M296 153L304 162M304 153L296 162M294.5 157.5H305.5M300 151.5V163.5" stroke="#808080" stroke-width="0.6"/>
<path d="M261 155Q262 153.6 266 153.8Q267.3 153.6 267.5 152.6Q267.7 153.6 269 153.8Q273 153.6 274 155M313.5 155Q314.5 153.6 318.5 153.8Q319.8 153.6 320 152.6Q320.2 153.6 321.5 153.8Q325.5 153.6 326.5 155" stroke="#404040" stroke-width="0.5" fill="none"/>
<path d="M127.5 156.3l-2.4-1.3v2.6z" fill="#000"/>
<path d="M113.5 155a1.6 1.6 0 0 1 0 3z" fill="#000"/>
</svg>
<span class="t" id="t55" style="top:152.80px;font-size:7px;line-height:9px;color:#202020;font-style:italic;font-family:"Liberation Serif",serif;">КС<span style="font-size:4.5px;position:relative;top:1.2px">1</span></span>
<span class="t" id="t56" style="top:152.80px;font-size:7px;line-height:9px;color:#202020;font-style:italic;font-family:"Liberation Serif",serif;">КС<span style="font-size:4.5px;position:relative;top:1.2px">2</span></span>
<span class="t" id="t57" style="top:140.75px;font-size:5.5px;line-height:7.5px;color:#202020;font-style:italic;font-family:"Liberation Serif",serif;">t<span style="font-size:3.6px;position:relative;top:1.2px">21</span></span>
<span class="t" id="t58" style="top:140.75px;font-size:5.5px;line-height:7.5px;color:#202020;font-style:italic;font-family:"Liberation Serif",serif;">t<span style="font-size:3.6px;position:relative;top:1.2px">21</span></span>
<span class="t" id="t59" style="top:146.75px;font-size:5.5px;line-height:7.5px;color:#202020;font-style:italic;font-family:"Liberation Serif",serif;">t<span style="font-size:3.6px;position:relative;top:1.2px">л</span></span>
<span class="t" id="t60" style="top:146.75px;font-size:5.5px;line-height:7.5px;color:#202020;font-style:italic;font-family:"Liberation Serif",serif;">t<span style="font-size:3.6px;position:relative;top:1.2px">л</span></span>
<span class="t" id="t61" style="top:145.55px;font-size:5.5px;line-height:7.5px;color:#202020;font-style:italic;font-family:"Liberation Serif",serif;">x<span style="font-size:3.6px;position:relative;top:1.2px">1</span></span>
<span class="t" id="t62" style="top:145.55px;font-size:5.5px;line-height:7.5px;color:#202020;font-style:italic;font-family:"Liberation Serif",serif;">x<span style="font-size:3.6px;position:relative;top:1.2px">2</span></span>
<span class="t" id="t63" style="top:161.00px;font-size:7px;line-height:9px;color:#202020;font-style:italic;font-family:"Liberation Serif",serif;">L<span style="font-size:4.5px;position:relative;top:1.2px">1</span></span>
<span class="t" id="t64" style="top:161.00px;font-size:7px;line-height:9px;color:#202020;font-style:italic;font-family:"Liberation Serif",serif;">L<span style="font-size:4.5px;position:relative;top:1.2px">2</span></span>
<span class="t" id="t65" style="top:183.00px;font-size:6px;line-height:8px;color:#202020;font-style:italic;font-family:"Liberation Serif",serif;">L<span style="font-size:3.9px;position:relative;top:1.2px"></span></span>
<span class="t" id="t66" style="top:205.50px;font-size:7.4px;line-height:9.4px;color:#000;">L<span style="font-size:7.2px;position:relative;top:2.3px"></span></span>
<span class="t" id="t67" style="top:206.00px;font-size:7px;line-height:9px;color:#000;">- длина участка трубопровода между КС, м</span>
<div style="left:332px;top:201.6px;width:46.6px;height:11.6px;background:#fff;box-shadow:inset 1px 1px 0 #505050, inset -1px -1px 0 #f4f2ee, inset 2px 2px 0 #b8b4ac;"></div>
<span class="t" id="t68" style="top:203.10px;font-size:7px;line-height:9px;color:#000;">2000,000</span>
<span class="t" id="t69" style="top:219.40px;font-size:7.4px;line-height:9.4px;color:#000;">L<span style="font-size:7.2px;position:relative;top:2.3px">1</span></span>
<span class="t" id="t70" style="top:219.90px;font-size:7px;line-height:9px;color:#000;">- длина участка трубопровода до места аварии, м</span>
<div style="left:332px;top:215.49px;width:46.6px;height:11.6px;background:#fff;box-shadow:inset 1px 1px 0 #505050, inset -1px -1px 0 #f4f2ee, inset 2px 2px 0 #b8b4ac;"></div>
<span class="t" id="t71" style="top:216.99px;font-size:7px;line-height:9px;color:#000;">1000,000</span>
<span class="t" id="t72" style="top:233.30px;font-size:7.4px;line-height:9.4px;color:#000;">x<span style="font-size:7.2px;position:relative;top:2.3px">1</span></span>
<span class="t" id="t73" style="top:233.80px;font-size:7px;line-height:9px;color:#000;">- длина отсеченного отрезка трубопровода до места аварии, м</span>
<div style="left:332px;top:229.38px;width:46.6px;height:11.6px;background:#fff;box-shadow:inset 1px 1px 0 #505050, inset -1px -1px 0 #f4f2ee, inset 2px 2px 0 #b8b4ac;"></div>
<span class="t" id="t74" style="top:230.88px;font-size:7px;line-height:9px;color:#000;">50,000</span>
<span class="t" id="t75" style="top:247.20px;font-size:7.4px;line-height:9.4px;color:#000;">x<span style="font-size:7.2px;position:relative;top:2.3px">2</span></span>
<span class="t" id="t76" style="top:247.70px;font-size:7px;line-height:9px;color:#000;">- длина отсеченного отрезка трубопровода после места аварии, м</span>
<div style="left:332px;top:243.26999999999998px;width:46.6px;height:11.6px;background:#fff;box-shadow:inset 1px 1px 0 #505050, inset -1px -1px 0 #f4f2ee, inset 2px 2px 0 #b8b4ac;"></div>
<span class="t" id="t77" style="top:244.77px;font-size:7px;line-height:9px;color:#000;">50,000</span>
<span class="t" id="t78" style="top:261.10px;font-size:7.4px;line-height:9.4px;color:#000;">d<span style="font-size:7.2px;position:relative;top:2.3px">0</span></span>
<span class="t" id="t79" style="top:261.60px;font-size:7px;line-height:9px;color:#000;">- внутренний диаметр трубопровода, мм</span>
<div style="left:332px;top:257.15999999999997px;width:46.6px;height:11.6px;background:#fff;box-shadow:inset 1px 1px 0 #505050, inset -1px -1px 0 #f4f2ee, inset 2px 2px 0 #b8b4ac;"></div>
<span class="t" id="t80" style="top:258.66px;font-size:7px;line-height:9px;color:#000;">1000</span>
<span class="t" id="t81" style="top:275.00px;font-size:7.4px;line-height:9.4px;color:#b0aca4;">λ<span style="font-size:7.2px;position:relative;top:2.3px"></span></span>
<span class="t" id="t82" style="top:275.50px;font-size:7px;line-height:9px;color:#000;">- коэффициент трения газа о стенки трубы (шероховатость)</span>
<div style="left:332px;top:271.05px;width:46.6px;height:11.6px;background:#fff;box-shadow:inset 1px 1px 0 #505050, inset -1px -1px 0 #f4f2ee, inset 2px 2px 0 #b8b4ac;"></div>
<span class="t" id="t83" style="top:272.55px;font-size:7px;line-height:9px;color:#000;">0,03500</span>
<span class="t" id="t84" style="top:288.90px;font-size:7.4px;line-height:9.4px;color:#000;">A<span style="font-size:7.2px;position:relative;top:2.3px">p</span></span>
<span class="t" id="t85" style="top:289.40px;font-size:7px;line-height:9px;color:#000;">- площадь поперечного сечения разрыва,  см2</span>
<div style="left:332px;top:284.94px;width:46.6px;height:11.6px;background:#fff;box-shadow:inset 1px 1px 0 #505050, inset -1px -1px 0 #f4f2ee, inset 2px 2px 0 #b8b4ac;"></div>
<span class="t" id="t86" style="top:286.44px;font-size:7px;line-height:9px;color:#000;">7853,981634</span>
<span class="t" id="t87" style="top:302.80px;font-size:7.4px;line-height:9.4px;color:#000;">t<span style="font-size:7.2px;position:relative;top:2.3px">л</span></span>
<span class="t" id="t88" style="top:303.30px;font-size:7px;line-height:9px;color:#000;">- время закрытия линейного крана, с</span>
<div style="left:332px;top:298.83px;width:46.6px;height:11.6px;background:#fff;box-shadow:inset 1px 1px 0 #505050, inset -1px -1px 0 #f4f2ee, inset 2px 2px 0 #b8b4ac;"></div>
<span class="t" id="t89" style="top:300.33px;font-size:7px;line-height:9px;color:#000;">5</span>
<span class="t" id="t90" style="top:316.70px;font-size:7.4px;line-height:9.4px;color:#000;">t<span style="font-size:7.2px;position:relative;top:2.3px">21</span></span>
<span class="t" id="t91" style="top:317.20px;font-size:7px;line-height:9px;color:#000;">- время остановки перекачки, с</span>
<div style="left:332px;top:312.72px;width:46.6px;height:11.6px;background:#fff;box-shadow:inset 1px 1px 0 #505050, inset -1px -1px 0 #f4f2ee, inset 2px 2px 0 #b8b4ac;"></div>
<span class="t" id="t92" style="top:314.22px;font-size:7px;line-height:9px;color:#000;">10</span>
<div style="left:384px;top:285.5px;width:14px;height:12px;background:#d4d0c8;box-shadow:inset -1px -1px 0 #404040, inset 1px 1px 0 #fff, inset -2px -2px 0 #808080;"></div>
<div style="left:386.8px;top:288px;width:8.4px;height:7px;background:#409050;border:1px solid #205030;"></div>
<div style="left:388px;top:289.1px;width:6px;height:1.8px;background:#d0f0d0;"></div>
<div style="left:90.5px;top:335px;width:309.5px;height:151px;border:1px solid #a09c94;box-shadow:1px 1px 0 #f0eee9, inset 1px 1px 0 #f0eee9;"></div>
<div style="left:94.5px;top:331px;width:132px;height:8px;background:#d4d0c8;"></div>
<span class="t" id="t93" style="top:331.00px;font-size:7px;line-height:9px;color:#000;">Характеристики содержимого трубопровода</span>
<span class="t" id="t94" style="top:340.30px;font-size:7px;line-height:9px;color:#000;">Наименование</span>
<span class="t" id="t95" style="top:348.10px;font-size:7px;line-height:9px;color:#000;">вещества:</span>
<div style="left:145.5px;top:340.8px;width:229.8px;height:11.3px;background:#d4d0c8;box-shadow:inset 1px 1px 0 #505050, inset -1px -1px 0 #f4f2ee, inset 2px 2px 0 #b8b4ac;"></div>
<span class="t" id="t96" style="top:341.80px;font-size:7px;line-height:9px;color:#000;">(R)-(-)-2-ФЕНИЛГЛИЦИНХЛОРИД гидрохлорид+</span>
<span class="t" id="t97" style="top:359.70px;font-size:8.8px;line-height:10.8px;color:#000;">P<span style="font-size:7px;position:relative;top:2.2px">н</span></span>
<span class="t" id="t98" style="top:361.50px;font-size:7px;line-height:9px;color:#000;">- давление газа в начале участка трубопровода до разрыва, МПа</span>
<div style="left:333px;top:361.7px;width:44px;height:11.2px;background:#fff;box-shadow:inset 1px 1px 0 #505050, inset -1px -1px 0 #f4f2ee, inset 2px 2px 0 #b8b4ac;"></div>
<span class="t" id="t99" style="top:362.80px;font-size:7px;line-height:9px;color:#000;">1,000</span>
<span class="t" id="t100" style="top:373.50px;font-size:8.8px;line-height:10.8px;color:#000;">P<span style="font-size:7px;position:relative;top:2.2px">к</span></span>
<span class="t" id="t101" style="top:375.30px;font-size:7px;line-height:9px;color:#000;">- давление газа в конце участка трубопровода до разрыва, МПа</span>
<div style="left:333px;top:375.59px;width:44px;height:11.2px;background:#fff;box-shadow:inset 1px 1px 0 #505050, inset -1px -1px 0 #f4f2ee, inset 2px 2px 0 #b8b4ac;"></div>
<span class="t" id="t102" style="top:376.69px;font-size:7px;line-height:9px;color:#000;">0,900</span>
<span class="t" id="t103" style="top:387.20px;font-size:8.8px;line-height:10.8px;color:#000;">T<span style="font-size:7px;position:relative;top:2.2px">н</span></span>
<span class="t" id="t104" style="top:389.00px;font-size:7px;line-height:9px;color:#000;">- температура газа в трубопроводе до разрыва, °C</span>
<div style="left:333px;top:389.48px;width:44px;height:11.2px;background:#fff;box-shadow:inset 1px 1px 0 #505050, inset -1px -1px 0 #f4f2ee, inset 2px 2px 0 #b8b4ac;"></div>
<span class="t" id="t105" style="top:390.58px;font-size:7px;line-height:9px;color:#000;">-15,00</span>
<span class="t" id="t106" style="top:400.70px;font-size:8.8px;line-height:10.8px;color:#000;">k<span style="font-size:7px;position:relative;top:2.2px"></span></span>
<span class="t" id="t107" style="top:402.50px;font-size:7px;line-height:9px;color:#000;">- показатель адиабаты газа</span>
<div style="left:333px;top:403.37px;width:44px;height:11.2px;background:#fff;box-shadow:inset 1px 1px 0 #505050, inset -1px -1px 0 #f4f2ee, inset 2px 2px 0 #b8b4ac;"></div>
<span class="t" id="t108" style="top:404.47px;font-size:7px;line-height:9px;color:#000;">1,100</span>
<span class="t" id="t109" style="top:415.00px;font-size:8.8px;line-height:10.8px;color:#000;">Z<span style="font-size:7px;position:relative;top:2.2px">н</span></span>
<span class="t" id="t110" style="top:416.80px;font-size:7px;line-height:9px;color:#000;">- коэффициент сжимаемости газа до разрыва</span>
<div style="left:333px;top:417.26px;width:44px;height:11.2px;background:#fff;box-shadow:inset 1px 1px 0 #505050, inset -1px -1px 0 #f4f2ee, inset 2px 2px 0 #b8b4ac;"></div>
<span class="t" id="t111" style="top:418.36px;font-size:7px;line-height:9px;color:#000;">1,000</span>
<span class="t" id="t112" style="top:431.20px;font-size:8.8px;line-height:10.8px;color:#000;">Z<span style="font-size:7px;position:relative;top:2.2px">кр</span></span>
<div style="left:333px;top:431.15px;width:44px;height:11.2px;background:#fff;box-shadow:inset 1px 1px 0 #505050, inset -1px -1px 0 #f4f2ee, inset 2px 2px 0 #b8b4ac;"></div>
<span class="t" id="t113" style="top:432.25px;font-size:7px;line-height:9px;color:#000;">1,000</span>
<span class="t" id="t114" style="top:446.10px;font-size:7px;line-height:9px;color:#787878;">μ</span>
<span class="t" id="t115" style="top:449.50px;font-size:7px;line-height:9px;color:#000;">- молярная масса, кг/моль</span>
<div style="left:333px;top:445.03999999999996px;width:44px;height:11.2px;background:#fff;box-shadow:inset 1px 1px 0 #505050, inset -1px -1px 0 #f4f2ee, inset 2px 2px 0 #b8b4ac;"></div>
<span class="t" id="t116" style="top:446.14px;font-size:7px;line-height:9px;color:#000;">23,000</span>
<span class="t" id="t117" style="top:461.30px;font-size:8.8px;line-height:10.8px;color:#000;">V<span style="font-size:7px;position:relative;top:2.2px">пр</span></span>
<span class="t" id="t118" style="top:463.10px;font-size:7px;line-height:9px;color:#000;">- максимальный объем прокачки , м3/час</span>
<div style="left:333px;top:458.93px;width:44px;height:11.2px;background:#fff;box-shadow:inset 1px 1px 0 #505050, inset -1px -1px 0 #f4f2ee, inset 2px 2px 0 #b8b4ac;"></div>
<span class="t" id="t119" style="top:460.03px;font-size:7px;line-height:9px;color:#000;">1000,000</span>
<span class="t" id="t120" style="top:473.60px;font-size:7px;line-height:9px;color:#787878;">ρ</span>
<span class="t" id="t121" style="top:477.00px;font-size:7px;line-height:9px;color:#000;">- плотность, кг/м3</span>
<div style="left:333px;top:472.82px;width:44px;height:11.2px;background:#fff;box-shadow:inset 1px 1px 0 #505050, inset -1px -1px 0 #f4f2ee, inset 2px 2px 0 #b8b4ac;"></div>
<span class="t" id="t122" style="top:473.92px;font-size:7px;line-height:9px;color:#000;">1,400</span>
<span class="t" id="t123" style="top:430.80px;font-size:7px;line-height:9px;color:#000;">- коэффициент сжимаемости по условиям газа на срезе</span>
<span class="t" id="t124" style="top:438.30px;font-size:7px;line-height:9px;color:#000;">(выходе) при критических значениях давления и температуры</span>
<div style="left:405.5px;top:117px;width:244px;height:369px;background:#d4d0c8;box-shadow:inset 1px 1px 0 #ece9e3, inset -1px -1px 0 #808080;"></div>
<div style="left:405.5px;top:131px;width:244px;height:0.8px;background:#808080;"></div>
<span class="t" id="t125" style="top:119.85px;font-size:7.5px;line-height:9.5px;color:#000;font-weight:bold;">Результаты расчета</span>
<div style="left:406px;top:132px;width:242.5px;height:118.2px;background:#fff;border:1px solid #808080;border-top-color:#404040;border-left-color:#404040;"></div>
<div style="left:407px;top:133px;width:7px;height:10px;background:#d4d0c8;box-shadow:inset 1px 1px 0 #e6e3dd, inset -1px -1px 0 #484848;"></div>
<div style="left:414px;top:133px;width:190px;height:10px;background:#d4d0c8;box-shadow:inset 1px 1px 0 #e6e3dd, inset -1px -1px 0 #484848;"></div>
<div style="left:604px;top:133px;width:36px;height:10px;background:#d4d0c8;box-shadow:inset 1px 1px 0 #e6e3dd, inset -1px -1px 0 #484848;"></div>
<span class="t" id="t126" style="top:134.20px;font-size:7px;line-height:9px;color:#000;">Время с момента разрыва, с</span>
<span class="t" id="t127" style="top:134.20px;font-size:7px;line-height:9px;color:#000;">Расход, кг/с</span>
<div style="left:407px;top:143.0px;width:7px;height:10.55px;background:#d4d0c8;box-shadow:inset 1px 1px 0 #e6e3dd, inset -1px -1px 0 #484848;"></div>
<div style="left:414px;top:154px;width:225px;height:1px;background:#d0d0d0;"></div>
<span class="t" id="t128" style="top:144.00px;font-size:7px;line-height:9px;color:#000;">1,00</span>
<span class="t" id="t129" style="top:144.00px;font-size:7px;line-height:9px;color:#000;">30862,8</span>
<div style="left:407px;top:153.55px;width:7px;height:10.55px;background:#d4d0c8;box-shadow:inset 1px 1px 0 #e6e3dd, inset -1px -1px 0 #484848;"></div>
<div style="left:414px;top:164px;width:225px;height:1px;background:#d0d0d0;"></div>
<span class="t" id="t130" style="top:154.55px;font-size:7px;line-height:9px;color:#000;">2,00</span>
<span class="t" id="t131" style="top:154.55px;font-size:7px;line-height:9px;color:#000;">28050,05</span>
<div style="left:407px;top:164.1px;width:7px;height:10.55px;background:#d4d0c8;box-shadow:inset 1px 1px 0 #e6e3dd, inset -1px -1px 0 #484848;"></div>
<div style="left:414px;top:175px;width:225px;height:1px;background:#d0d0d0;"></div>
<span class="t" id="t132" style="top:165.10px;font-size:7px;line-height:9px;color:#000;">3,00</span>
<span class="t" id="t133" style="top:165.10px;font-size:7px;line-height:9px;color:#000;">27981,37</span>
<div style="left:407px;top:174.65px;width:7px;height:10.55px;background:#d4d0c8;box-shadow:inset 1px 1px 0 #e6e3dd, inset -1px -1px 0 #484848;"></div>
<div style="left:414px;top:185px;width:225px;height:1px;background:#d0d0d0;"></div>
<span class="t" id="t134" style="top:175.65px;font-size:7px;line-height:9px;color:#000;">4,00</span>
<span class="t" id="t135" style="top:175.65px;font-size:7px;line-height:9px;color:#000;">27912,86</span>
<div style="left:407px;top:185.2px;width:7px;height:10.55px;background:#d4d0c8;box-shadow:inset 1px 1px 0 #e6e3dd, inset -1px -1px 0 #484848;"></div>
<div style="left:414px;top:196px;width:225px;height:1px;background:#d0d0d0;"></div>
<span class="t" id="t136" style="top:186.20px;font-size:7px;line-height:9px;color:#000;">5,00</span>
<span class="t" id="t137" style="top:186.20px;font-size:7px;line-height:9px;color:#000;">27844,63</span>
<div style="left:407px;top:195.75px;width:7px;height:10.55px;background:#d4d0c8;box-shadow:inset 1px 1px 0 #e6e3dd, inset -1px -1px 0 #484848;"></div>
<div style="left:414px;top:206px;width:225px;height:1px;background:#d0d0d0;"></div>
<span class="t" id="t138" style="top:196.75px;font-size:7px;line-height:9px;color:#000;">6,00</span>
<span class="t" id="t139" style="top:196.75px;font-size:7px;line-height:9px;color:#000;">27776,52</span>
<div style="left:407px;top:206.3px;width:7px;height:10.55px;background:#d4d0c8;box-shadow:inset 1px 1px 0 #e6e3dd, inset -1px -1px 0 #484848;"></div>
<div style="left:414px;top:217px;width:225px;height:1px;background:#d0d0d0;"></div>
<span class="t" id="t140" style="top:207.30px;font-size:7px;line-height:9px;color:#000;">7,00</span>
<span class="t" id="t141" style="top:207.30px;font-size:7px;line-height:9px;color:#000;">27708,59</span>
<div style="left:407px;top:216.85000000000002px;width:7px;height:10.55px;background:#d4d0c8;box-shadow:inset 1px 1px 0 #e6e3dd, inset -1px -1px 0 #484848;"></div>
<div style="left:414px;top:227px;width:225px;height:1px;background:#d0d0d0;"></div>
<span class="t" id="t142" style="top:217.85px;font-size:7px;line-height:9px;color:#000;">8,00</span>
<span class="t" id="t143" style="top:217.85px;font-size:7px;line-height:9px;color:#000;">27640,83</span>
<div style="left:407px;top:227.4px;width:7px;height:10.55px;background:#d4d0c8;box-shadow:inset 1px 1px 0 #e6e3dd, inset -1px -1px 0 #484848;"></div>
<div style="left:414px;top:238px;width:225px;height:1px;background:#d0d0d0;"></div>
<span class="t" id="t144" style="top:228.40px;font-size:7px;line-height:9px;color:#000;">9,00</span>
<span class="t" id="t145" style="top:228.40px;font-size:7px;line-height:9px;color:#000;">27573,23</span>
<div style="left:603px;top:143px;width:1px;height:96px;background:#d0d0d0;"></div>
<svg style="left:408px;top:145.5px" width="5" height="7"><path d="M0.5 0L4.5 3.5L0.5 7z" fill="#000"/></svg>
<div style="left:638.6px;top:133px;width:8.6px;height:107px;background:#efede9;"></div>
<div style="left:638.6px;top:133px;width:8.6px;height:10px;background:#d4d0c8;box-shadow:inset -1px -1px 0 #404040, inset 1px 1px 0 #fff, inset -2px -2px 0 #808080;"></div>
<div style="left:638.6px;top:143px;width:8.6px;height:27px;background:#d4d0c8;box-shadow:inset -1px -1px 0 #404040, inset 1px 1px 0 #fff, inset -2px -2px 0 #808080;"></div>
<div style="left:638.6px;top:231.6px;width:8.6px;height:8.6px;background:#d4d0c8;box-shadow:inset -1px -1px 0 #404040, inset 1px 1px 0 #fff, inset -2px -2px 0 #808080;"></div>
<svg style="left:640.9px;top:137px" width="4" height="2.5"><path d="M0 2.5L2 0L4 2.5z" fill="#000"/></svg>
<svg style="left:640.9px;top:234.5px" width="4" height="2.5"><path d="M0 0L2 2.5L4 0z" fill="#000"/></svg>
<div style="left:407px;top:240.4px;width:231.6px;height:8.8px;background:#efede9;"></div>
<div style="left:407px;top:240.4px;width:8.6px;height:8.8px;background:#d4d0c8;box-shadow:inset -1px -1px 0 #404040, inset 1px 1px 0 #fff, inset -2px -2px 0 #808080;"></div>
<div style="left:415.6px;top:240.4px;width:9.2px;height:8.8px;background:#d4d0c8;box-shadow:inset -1px -1px 0 #404040, inset 1px 1px 0 #fff, inset -2px -2px 0 #808080;"></div>
<div style="left:630.4px;top:240.4px;width:8.2px;height:8.8px;background:#d4d0c8;box-shadow:inset -1px -1px 0 #404040, inset 1px 1px 0 #fff, inset -2px -2px 0 #808080;"></div>
<div style="left:638.6px;top:240px;width:8.8px;height:9.2px;background:#d4d0c8;"></div>
<svg style="left:409.8px;top:242.8px" width="2.5" height="4"><path d="M2.5 0L0 2L2.5 4z" fill="#000"/></svg>
<svg style="left:633.4px;top:242.8px" width="2.5" height="4"><path d="M0 0L2.5 2L0 4z" fill="#000"/></svg>
<span class="t" id="t146" style="top:257.60px;font-size:8px;line-height:10px;color:#404040;">τ</span>
<span class="t" id="t147" style="top:260.40px;font-size:7px;line-height:9px;color:#000;">- максимальное время, прошедшее с момента разрыва, с</span>
<div style="left:609.3px;top:256px;width:33.8px;height:10.6px;background:#fff;box-shadow:inset 1px 1px 0 #505050, inset -1px -1px 0 #f4f2ee, inset 2px 2px 0 #b8b4ac;"></div>
<span class="t" id="t148" style="top:257.40px;font-size:7px;line-height:9px;color:#000;">20</span>
<span class="t" id="t149" style="top:276.55px;font-size:7.5px;line-height:9.5px;color:#404040;">c<span style="font-size:6.5px;position:relative;top:1px">τ</span></span>
<span class="t" id="t150" style="top:273.80px;font-size:7px;line-height:9px;color:#000;">- шаг расчета, с</span>
<div style="left:609.3px;top:270.4px;width:33.8px;height:10.6px;background:#fff;box-shadow:inset 1px 1px 0 #505050, inset -1px -1px 0 #f4f2ee, inset 2px 2px 0 #b8b4ac;"></div>
<span class="t" id="t151" style="top:271.20px;font-size:7px;line-height:9px;color:#000;">1,00</span>
<span class="t" id="t152" style="top:288.00px;font-size:7px;line-height:9px;color:#000;">Единица измерения расхода</span>
<div style="left:609.3px;top:283.6px;width:32px;height:11px;background:#fff;box-shadow:inset 1px 1px 0 #505050, inset -1px -1px 0 #f4f2ee, inset 2px 2px 0 #b8b4ac;"></div>
<span class="t" id="t153" style="top:285.10px;font-size:7px;line-height:9px;color:#000;">кг/с</span>
<div style="left:631.7px;top:285px;width:8px;height:8.4px;background:#d4d0c8;box-shadow:inset -1px -1px 0 #404040, inset 1px 1px 0 #fff, inset -2px -2px 0 #808080;"></div>
<svg style="left:633.8px;top:288.2px" width="4" height="2.5"><path d="M0 0L2 2.5L4 0z" fill="#000"/></svg>
<div style="left:503px;top:299.8px;width:47px;height:14.8px;background:#d4d0c8;box-shadow:inset -1px -1px 0 #404040, inset 1px 1px 0 #fff, inset -2px -2px 0 #808080;"></div>
<div style="left:509.6px;top:303px;width:9.8px;height:8.8px;background:#58a060;border:1px solid #306038;"></div>
<div style="left:511px;top:304.2px;width:7px;height:2px;background:#d8f0d8;"></div>
<div style="left:511px;top:307px;width:1.6px;height:3.4px;background:#204028;"></div>
<div style="left:513.6px;top:307px;width:1.6px;height:3.4px;background:#204028;"></div>
<div style="left:516.2px;top:307px;width:1.6px;height:3.4px;background:#204028;"></div>
<span class="t" id="t154" style="top:303.10px;font-size:7px;line-height:9px;color:#000;">Расчет</span>
<div style="left:406px;top:321px;width:243px;height:1px;background:#909090;"></div>
<div style="left:406px;top:322px;width:243px;height:1px;background:#f4f2ee;"></div>
<span class="t" id="t155" style="top:329.50px;font-size:7px;line-height:9px;color:#2828d8;">Характер аварийных выбросов на промысловых трубопроводах</span>
<svg style="left:0;top:0" width="686" height="530" viewBox="0 0 686 530"><path d="M453.6 354.9H641" stroke="#909090" stroke-width="0.6" stroke-dasharray="1.4 1.4"/><path d="M453.6 368.7H641" stroke="#909090" stroke-width="0.6" stroke-dasharray="1.4 1.4"/><path d="M453.6 382.6H641" stroke="#909090" stroke-width="0.6" stroke-dasharray="1.4 1.4"/><path d="M453.6 396.5H641" stroke="#909090" stroke-width="0.6" stroke-dasharray="1.4 1.4"/><path d="M453.6 410.4H641" stroke="#909090" stroke-width="0.6" stroke-dasharray="1.4 1.4"/><path d="M453.6 424.2H641" stroke="#909090" stroke-width="0.6" stroke-dasharray="1.4 1.4"/><path d="M463.5 341V436" stroke="#909090" stroke-width="0.6" stroke-dasharray="1.4 1.4"/><path d="M473.3 341V436" stroke="#909090" stroke-width="0.6" stroke-dasharray="1.4 1.4"/><path d="M483.2 341V436" stroke="#909090" stroke-width="0.6" stroke-dasharray="1.4 1.4"/><path d="M493.1 341V436" stroke="#909090" stroke-width="0.6" stroke-dasharray="1.4 1.4"/><path d="M502.9 341V436" stroke="#909090" stroke-width="0.6" stroke-dasharray="1.4 1.4"/><path d="M512.8 341V436" stroke="#909090" stroke-width="0.6" stroke-dasharray="1.4 1.4"/><path d="M522.6 341V436" stroke="#909090" stroke-width="0.6" stroke-dasharray="1.4 1.4"/><path d="M532.5 341V436" stroke="#909090" stroke-width="0.6" stroke-dasharray="1.4 1.4"/><path d="M542.4 341V436" stroke="#909090" stroke-width="0.6" stroke-dasharray="1.4 1.4"/><path d="M552.2 341V436" stroke="#909090" stroke-width="0.6" stroke-dasharray="1.4 1.4"/><path d="M562.1 341V436" stroke="#909090" stroke-width="0.6" stroke-dasharray="1.4 1.4"/><path d="M572.0 341V436" stroke="#909090" stroke-width="0.6" stroke-dasharray="1.4 1.4"/><path d="M581.8 341V436" stroke="#909090" stroke-width="0.6" stroke-dasharray="1.4 1.4"/><path d="M591.7 341V436" stroke="#909090" stroke-width="0.6" stroke-dasharray="1.4 1.4"/><path d="M601.5 341V436" stroke="#909090" stroke-width="0.6" stroke-dasharray="1.4 1.4"/><path d="M611.4 341V436" stroke="#909090" stroke-width="0.6" stroke-dasharray="1.4 1.4"/><path d="M621.3 341V436" stroke="#909090" stroke-width="0.6" stroke-dasharray="1.4 1.4"/><path d="M631.1 341V436" stroke="#909090" stroke-width="0.6" stroke-dasharray="1.4 1.4"/><path d="M453.6 341H641V436" stroke="#202020" stroke-width="0.7" stroke-dasharray="2 1.2" fill="none"/><path d="M453.6 341V436H641" stroke="#000" stroke-width="1.3" fill="none"/><clipPath id="pc"><rect x="453.6" y="340.7" width="188.2" height="95.8"/></clipPath><g clip-path="url(#pc)"><path d="M453.6 365.0 L463.5 373.4 L473.3 373.6 L483.2 373.8 L493.1 374.0 L502.9 374.2 L512.8 374.3 L522.6 374.4 L532.5 374.5 L542.4 374.6 L552.2 340.8 L562.1 362.1 L572.0 380.0 L581.8 394.2 L591.7 405.5 L601.5 415.0 L611.4 421.7 L621.3 427.6 L631.1 432.1 L641.0 435.5" stroke="#000" stroke-width="0.8" fill="none"/><circle cx="453.6" cy="365.0" r="2.4" fill="#000"/><circle cx="463.5" cy="373.4" r="2.4" fill="#000"/><circle cx="473.3" cy="373.6" r="2.4" fill="#000"/><circle cx="483.2" cy="373.8" r="2.4" fill="#000"/><circle cx="493.1" cy="374.0" r="2.4" fill="#000"/><circle cx="502.9" cy="374.2" r="2.4" fill="#000"/><circle cx="512.8" cy="374.3" r="2.4" fill="#000"/><circle cx="522.6" cy="374.4" r="2.4" fill="#000"/><circle cx="532.5" cy="374.5" r="2.4" fill="#000"/><circle cx="542.4" cy="374.6" r="2.4" fill="#000"/><circle cx="552.2" cy="340.8" r="2.4" fill="#000"/><circle cx="562.1" cy="362.1" r="2.4" fill="#000"/><circle cx="572.0" cy="380.0" r="2.4" fill="#000"/><circle cx="581.8" cy="394.2" r="2.4" fill="#000"/><circle cx="591.7" cy="405.5" r="2.4" fill="#000"/><circle cx="601.5" cy="415.0" r="2.4" fill="#000"/><circle cx="611.4" cy="421.7" r="2.4" fill="#000"/><circle cx="621.3" cy="427.6" r="2.4" fill="#000"/><circle cx="631.1" cy="432.1" r="2.4" fill="#000"/><circle cx="641.0" cy="435.5" r="2.4" fill="#000"/></g></svg>
<span class="t" id="t156" style="top:336.20px;font-size:7px;line-height:9px;color:#000;">39 852,906</span>
<span class="t" id="t157" style="top:350.07px;font-size:7px;line-height:9px;color:#000;">34 852,906</span>
<span class="t" id="t158" style="top:363.94px;font-size:7px;line-height:9px;color:#000;">29 852,906</span>
<span class="t" id="t159" style="top:377.81px;font-size:7px;line-height:9px;color:#000;">24 852,906</span>
<span class="t" id="t160" style="top:391.68px;font-size:7px;line-height:9px;color:#000;">19 852,906</span>
<span class="t" id="t161" style="top:405.55px;font-size:7px;line-height:9px;color:#000;">14 852,906</span>
<span class="t" id="t162" style="top:419.42px;font-size:7px;line-height:9px;color:#000;">9 852,906</span>
<span class="t" id="t163" style="top:439.80px;font-size:7px;line-height:9px;color:#000;">1</span>
<span class="t" id="t164" style="top:439.80px;font-size:7px;line-height:9px;color:#000;">2</span>
<span class="t" id="t165" style="top:439.80px;font-size:7px;line-height:9px;color:#000;">3</span>
<span class="t" id="t166" style="top:439.80px;font-size:7px;line-height:9px;color:#000;">4</span>
<span class="t" id="t167" style="top:439.80px;font-size:7px;line-height:9px;color:#000;">5</span>
<span class="t" id="t168" style="top:439.80px;font-size:7px;line-height:9px;color:#000;">6</span>
<span class="t" id="t169" style="top:439.80px;font-size:7px;line-height:9px;color:#000;">7</span>
<span class="t" id="t170" style="top:439.80px;font-size:7px;line-height:9px;color:#000;">8</span>
<span class="t" id="t171" style="top:439.80px;font-size:7px;line-height:9px;color:#000;">9</span>
<span class="t" id="t172" style="top:439.80px;font-size:7px;line-height:9px;color:#000;">10</span>
<span class="t" id="t173" style="top:439.80px;font-size:7px;line-height:9px;color:#000;">11</span>
<span class="t" id="t174" style="top:439.80px;font-size:7px;line-height:9px;color:#000;">12</span>
<span class="t" id="t175" style="top:439.80px;font-size:7px;line-height:9px;color:#000;">13</span>
<span class="t" id="t176" style="top:439.80px;font-size:7px;line-height:9px;color:#000;">14</span>
<span class="t" id="t177" style="top:439.80px;font-size:7px;line-height:9px;color:#000;">15</span>
<span class="t" id="t178" style="top:439.80px;font-size:7px;line-height:9px;color:#000;">16</span>
<span class="t" id="t179" style="top:439.80px;font-size:7px;line-height:9px;color:#000;">17</span>
<span class="t" id="t180" style="top:439.80px;font-size:7px;line-height:9px;color:#000;">18</span>
<span class="t" id="t181" style="top:439.80px;font-size:7px;line-height:9px;color:#000;">19</span>
<span class="t" id="t182" style="top:439.80px;font-size:7px;line-height:9px;color:#000;">20</span>
<span class="t" id="t183" style="top:447.90px;font-size:7px;line-height:9px;color:#000;">τ - время, прошедшее с момента разрыва трубопровода, с</span>
<span class="t" id="ytitle" style="left:416.4px;top:386.8px;font-size:7px;line-height:9px;transform:translate(-50%,-50%) rotate(-90deg) scaleX(0.98);transform-origin:50% 50%;">G(τ) - массовый расход, кг/с</span>
<div style="left:406px;top:461px;width:243px;height:1px;background:#909090;"></div>
<div style="left:406px;top:462px;width:243px;height:1px;background:#f4f2ee;"></div>
<span class="t" id="t184" style="top:470.75px;font-size:7.5px;line-height:9.5px;color:#000;font-weight:bold;">Масса выброшенного газа, кг</span>
<span class="t" id="t185" style="top:470.75px;font-size:7.5px;line-height:9.5px;color:#000;font-weight:bold;">4975415,8</span>
<svg style="left:642px;top:489px" width="8" height="8"><path d="M8 0L0 8M8 3L3 8M8 6L6 8" stroke="#808080" stroke-width="0.9"/><path d="M8 1L1 8M8 4L4 8" stroke="#fff" stroke-width="0.7"/></svg>
<div style="left:85px;top:488px;width:565px;height:1px;background:#ece9e3;"></div>
</div>
</body></html>
